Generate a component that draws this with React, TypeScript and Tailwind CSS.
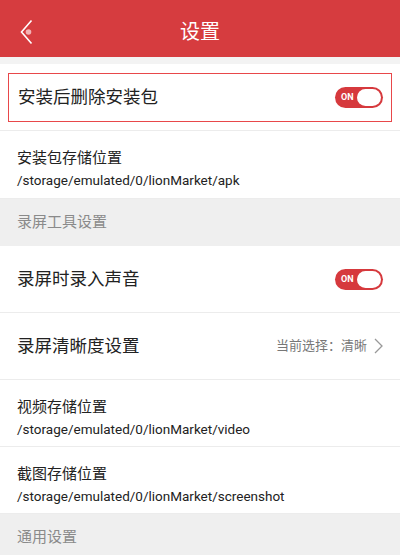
import React from "react";

const font = { fontFamily: 'Roboto, "Noto Sans CJK SC", "Noto Sans", sans-serif' };

const Toggle = () => (
  <div className="flex h-[21px] w-[48px] items-center rounded-full bg-[#d6393d] pl-[6px] pr-[2px]">
    <span className="text-[9px] font-bold leading-none text-white">ON</span>
    <span className="ml-auto h-[17px] w-[24px] rounded-full bg-white" />
  </div>
);

const PathRow = ({ title, path, tall }: { title: string; path: string; tall?: boolean }) => (
  <div
    className={
      tall
        ? "flex h-[68px] flex-col justify-center border-b border-[#ececec] bg-white px-[17px] pt-[9px]"
        : "flex h-[67px] flex-col justify-center border-b border-[#ececec] bg-white px-[17px] pt-[9px]"
    }
  >
    <div className="text-[15px] leading-[22px] text-[#222]">{title}</div>
    <div className="text-[13.5px] leading-[22px] text-[#222]">{path}</div>
  </div>
);

const SectionHeader = ({ label }: { label: string }) => (
  <div className="flex h-[47px] items-center bg-[#efefef] px-[17px] text-[15px] text-[#8a8a8a]">
    {label}
  </div>
);

export default function App() {
  return (
    <div className="h-[555px] w-[400px] overflow-hidden bg-white" style={font}>
      <div className="relative flex h-[57px] items-center justify-center bg-[#d63c3f] pt-[6px]">
        <svg className="absolute left-[18px] top-[19px]" width="18" height="26" viewBox="0 0 18 26">
          <path d="M13.5 1.5 L3.5 13 L13.5 24.5" fill="none" stroke="#fff" strokeWidth="1.6" />
          <circle cx="10.5" cy="13" r="2.8" fill="#f3b3b5" />
        </svg>
        <span className="text-[20px] text-white">设置</span>
      </div>
      <div className="h-[7px] bg-[#f3f3f3]" />
      <div className="px-[8px] pt-[9px] pb-[8px] border-b border-[#ececec]">
        <div className="flex h-[49px] items-center justify-between border border-[#e8474a] pl-[9px] pr-[8px]">
          <span className="text-[17.5px] text-[#222]">安装后删除安装包</span>
          <Toggle />
        </div>
      </div>
      <PathRow tall title="安装包存储位置" path="/storage/emulated/0/lionMarket/apk" />
      <SectionHeader label="录屏工具设置" />
      <div className="flex h-[67px] items-center justify-between border-b border-[#ececec] px-[17px]">
        <span className="text-[17.5px] text-[#222]">录屏时录入声音</span>
        <Toggle />
      </div>
      <div className="flex h-[67px] items-center justify-between border-b border-[#ececec] px-[17px]">
        <span className="text-[17.5px] text-[#222]">录屏清晰度设置</span>
        <div className="flex items-center gap-[7px]">
          <span className="text-[13px] text-[#777]">当前选择：清晰</span>
          <svg width="9" height="16" viewBox="0 0 9 16">
            <path d="M1 1 L8 8 L1 15" fill="none" stroke="#999" strokeWidth="1.3" />
          </svg>
        </div>
      </div>
      <PathRow title="视频存储位置" path="/storage/emulated/0/lionMarket/video" />
      <PathRow title="截图存储位置" path="/storage/emulated/0/lionMarket/screenshot" />
      <SectionHeader label="通用设置" />
    </div>
  );
}
